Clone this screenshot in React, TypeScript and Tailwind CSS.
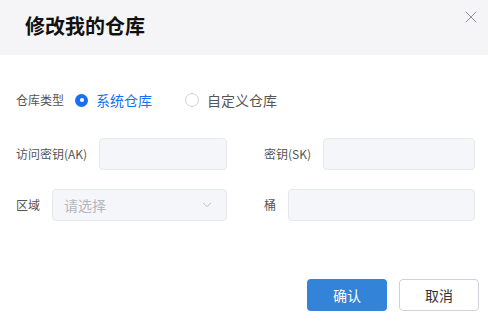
import { X, ChevronDown } from "lucide-react";

function Radio({ checked, label }: { checked: boolean; label: string }) {
  return (
    <label className="flex items-center gap-[8px] cursor-pointer">
      {checked ? (
        <span className="w-[13px] h-[13px] rounded-full bg-[#1a6ef5] flex items-center justify-center">
          <span className="w-[4px] h-[4px] rounded-full bg-white" />
        </span>
      ) : (
        <span className="w-[14px] h-[14px] rounded-full border border-[#cfd2d8] bg-white" />
      )}
      <span className={`text-[14px] ${checked ? "text-[#1a6ef5]" : "text-[#555]"}`}>{label}</span>
    </label>
  );
}

function Field({ label, width }: { label: string; width: string }) {
  return (
    <div className="flex items-center gap-[12px]">
      <span className="text-[12px] text-[#555] whitespace-nowrap">{label}</span>
      <div className={`${width} h-[32px] rounded-[4px] border border-[#e6e8ec] bg-[#f5f6f9]`} />
    </div>
  );
}

export default function App() {
  return (
    <div
      className="w-[488px] h-[317px] bg-white flex flex-col"
      style={{ fontFamily: '"Noto Sans CJK SC", "Noto Sans", sans-serif' }}
    >
      <div className="h-[55px] bg-[#f5f5f7] flex items-start justify-between pl-[25px] pr-[7px]">
        <h1 className="text-[20px] font-bold text-[#111] mt-[12px] leading-[28px]">修改我的仓库</h1>
        <X className="w-[20px] h-[20px] text-[#85888e] mt-[7px]" strokeWidth={1.1} />
      </div>

      <div className="pl-[16px] pr-[13px] flex flex-col">
        <div className="flex items-center h-[30px] mt-[30px]">
          <span className="text-[12px] text-[#555] w-[59px]">仓库类型</span>
          <div className="flex items-center gap-[33px]">
            <Radio checked label="系统仓库" />
            <Radio checked={false} label="自定义仓库" />
          </div>
        </div>

        <div className="flex items-center justify-between mt-[23px]">
          <Field label="访问密钥(AK)" width="w-[128px]" />
          <Field label="密钥(SK)" width="w-[152px]" />
        </div>

        <div className="flex items-center justify-between mt-[19px]">
          <div className="flex items-center gap-[12px]">
            <span className="text-[12px] text-[#555]">区域</span>
            <div className="w-[175px] h-[32px] rounded-[4px] border border-[#e6e8ec] bg-[#f5f6f9] flex items-center justify-between pl-[11px] pr-[12px]">
              <span className="text-[14px] text-[#b4b7bd]">请选择</span>
              <ChevronDown className="w-[14px] h-[14px] text-[#b4b7bd]" strokeWidth={1.5} />
            </div>
          </div>
          <Field label="桶" width="w-[187px]" />
        </div>
      </div>

      <div className="flex justify-end gap-[12px] pr-[9px] mt-[58px]">
        <button className="w-[80px] h-[32px] rounded-[4px] bg-[#3383d9] text-white text-[14px]">确认</button>
        <button className="w-[80px] h-[32px] rounded-[4px] border border-[#cfd2d8] bg-white text-[#333] text-[14px]">取消</button>
      </div>
    </div>
  );
}
